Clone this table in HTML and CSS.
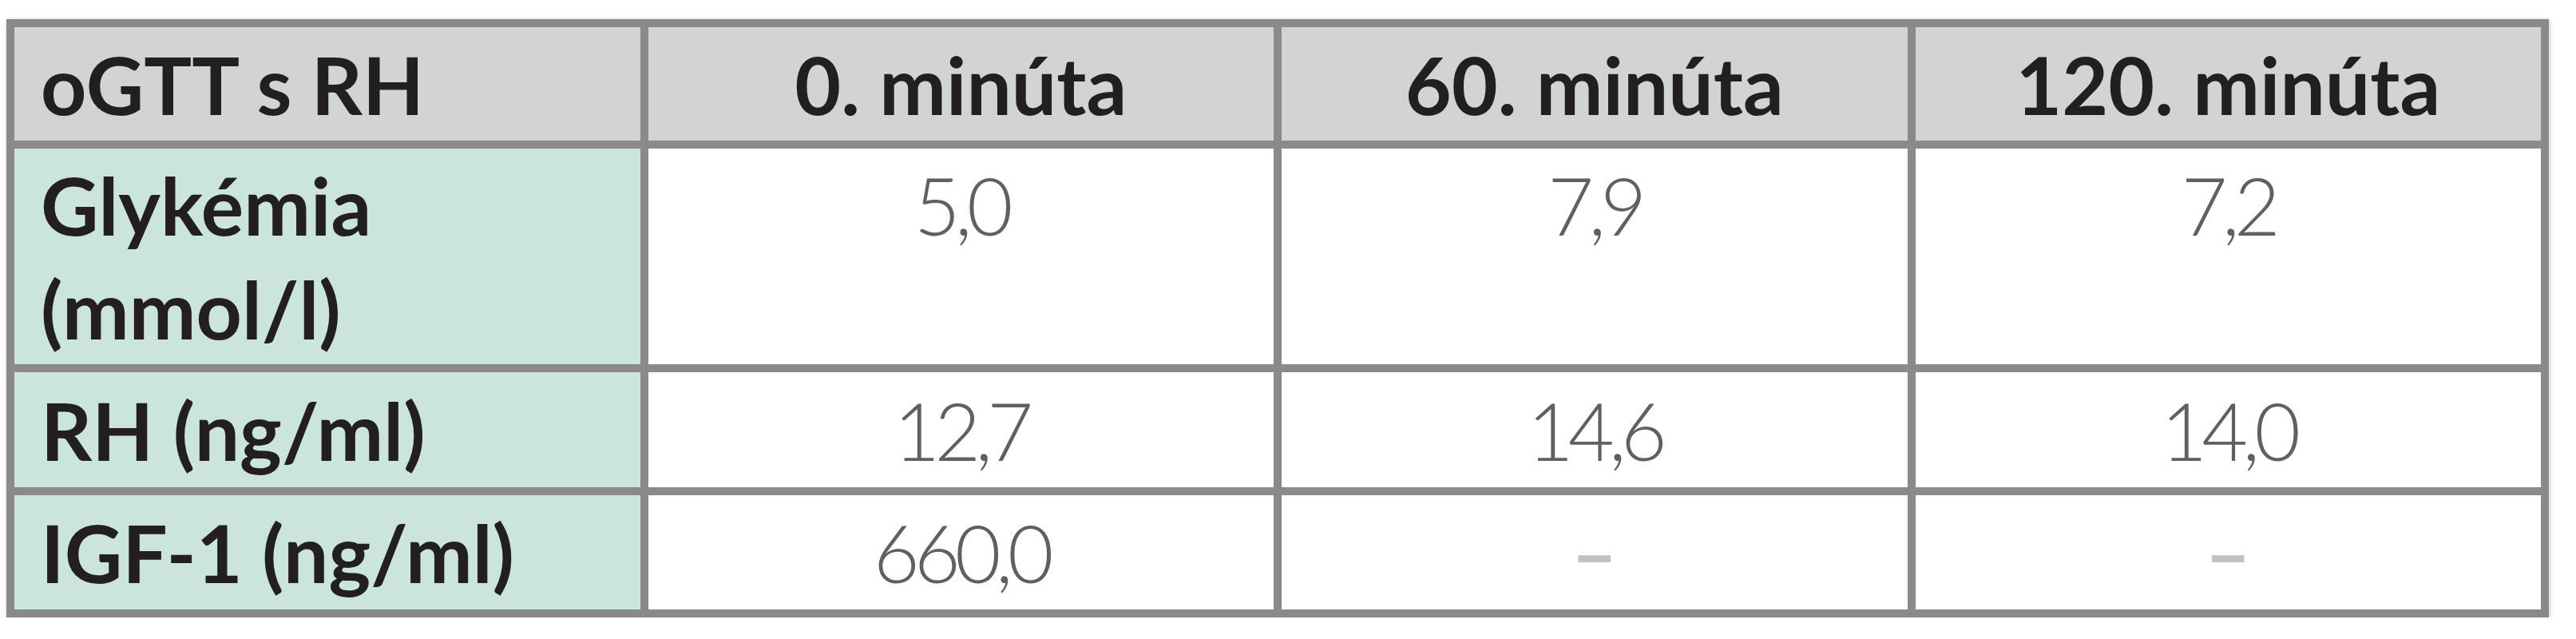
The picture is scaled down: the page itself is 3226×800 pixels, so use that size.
FILE: index.html
```html
<!DOCTYPE html>
<html lang="sk">
<head>
<meta charset="utf-8">
<title>oGTT s RH</title>
<link rel="stylesheet" href="styles.css">
</head>
<body>
<table class="ogtt">
  <colgroup>
    <col class="c"><col class="c"><col class="c"><col class="c">
  </colgroup>
  <thead>
    <tr class="r-head">
      <th class="label">oGTT s RH</th>
      <th>0. minúta</th>
      <th>60. minúta</th>
      <th>120. minúta</th>
    </tr>
  </thead>
  <tbody>
    <tr class="r-gly">
      <th class="label">Glykémia (mmol/l)</th>
      <td>5,0</td>
      <td>7,9</td>
      <td>7,2</td>
    </tr>
    <tr class="r-rh">
      <th class="label">RH (ng/ml)</th>
      <td>12,7</td>
      <td>14,6</td>
      <td>14,0</td>
    </tr>
    <tr class="r-igf">
      <th class="label">IGF-1 (ng/ml)</th>
      <td>660,0</td>
      <td class="dash">–</td>
      <td class="dash">–</td>
    </tr>
  </tbody>
</table>
</body>
</html>
```
FILE: styles.css
```css
html, body {
  margin: 0;
  padding: 0;
  background: #ffffff;
}

body {
  font-family: "Lato", "Open Sans", "Liberation Sans", sans-serif;
}

.ogtt {
  margin: 24px 0 0 8px;
  width: 3184px;
  table-layout: fixed;
  border-collapse: separate;
  border-spacing: 10px;
  background: #8a8a8a;
  box-shadow: 1px 1px 6px rgba(0, 0, 0, 0.22);
}

.ogtt th,
.ogtt td {
  font-size: 100px;
  line-height: 130px;
  padding: 6px 33px;
  text-align: center;
  vertical-align: middle;
  background: #ffffff;
}

.ogtt th {
  font-weight: 700;
  color: #231f20;
}

.ogtt thead th {
  background: #d1d3d4;
}

.ogtt .label {
  text-align: left;
}

.ogtt tbody .label {
  background: #cce4de;
}

.ogtt td {
  font-weight: 300;
  color: #5f6061;
  letter-spacing: -7px;
}

.ogtt td.dash {
  font-weight: 700;
  color: #c0c1c3;
  letter-spacing: 0;
}

.r-head th { padding-top: 6px; padding-bottom: 6px; }
.r-gly th, .r-gly td { padding-top: 5px; padding-bottom: 5px; }
.r-gly td { vertical-align: top; }
.r-rh th, .r-rh td { padding-top: 7px; padding-bottom: 7px; }
.r-igf th, .r-igf td { padding-top: 6px; padding-bottom: 7px; }
```
